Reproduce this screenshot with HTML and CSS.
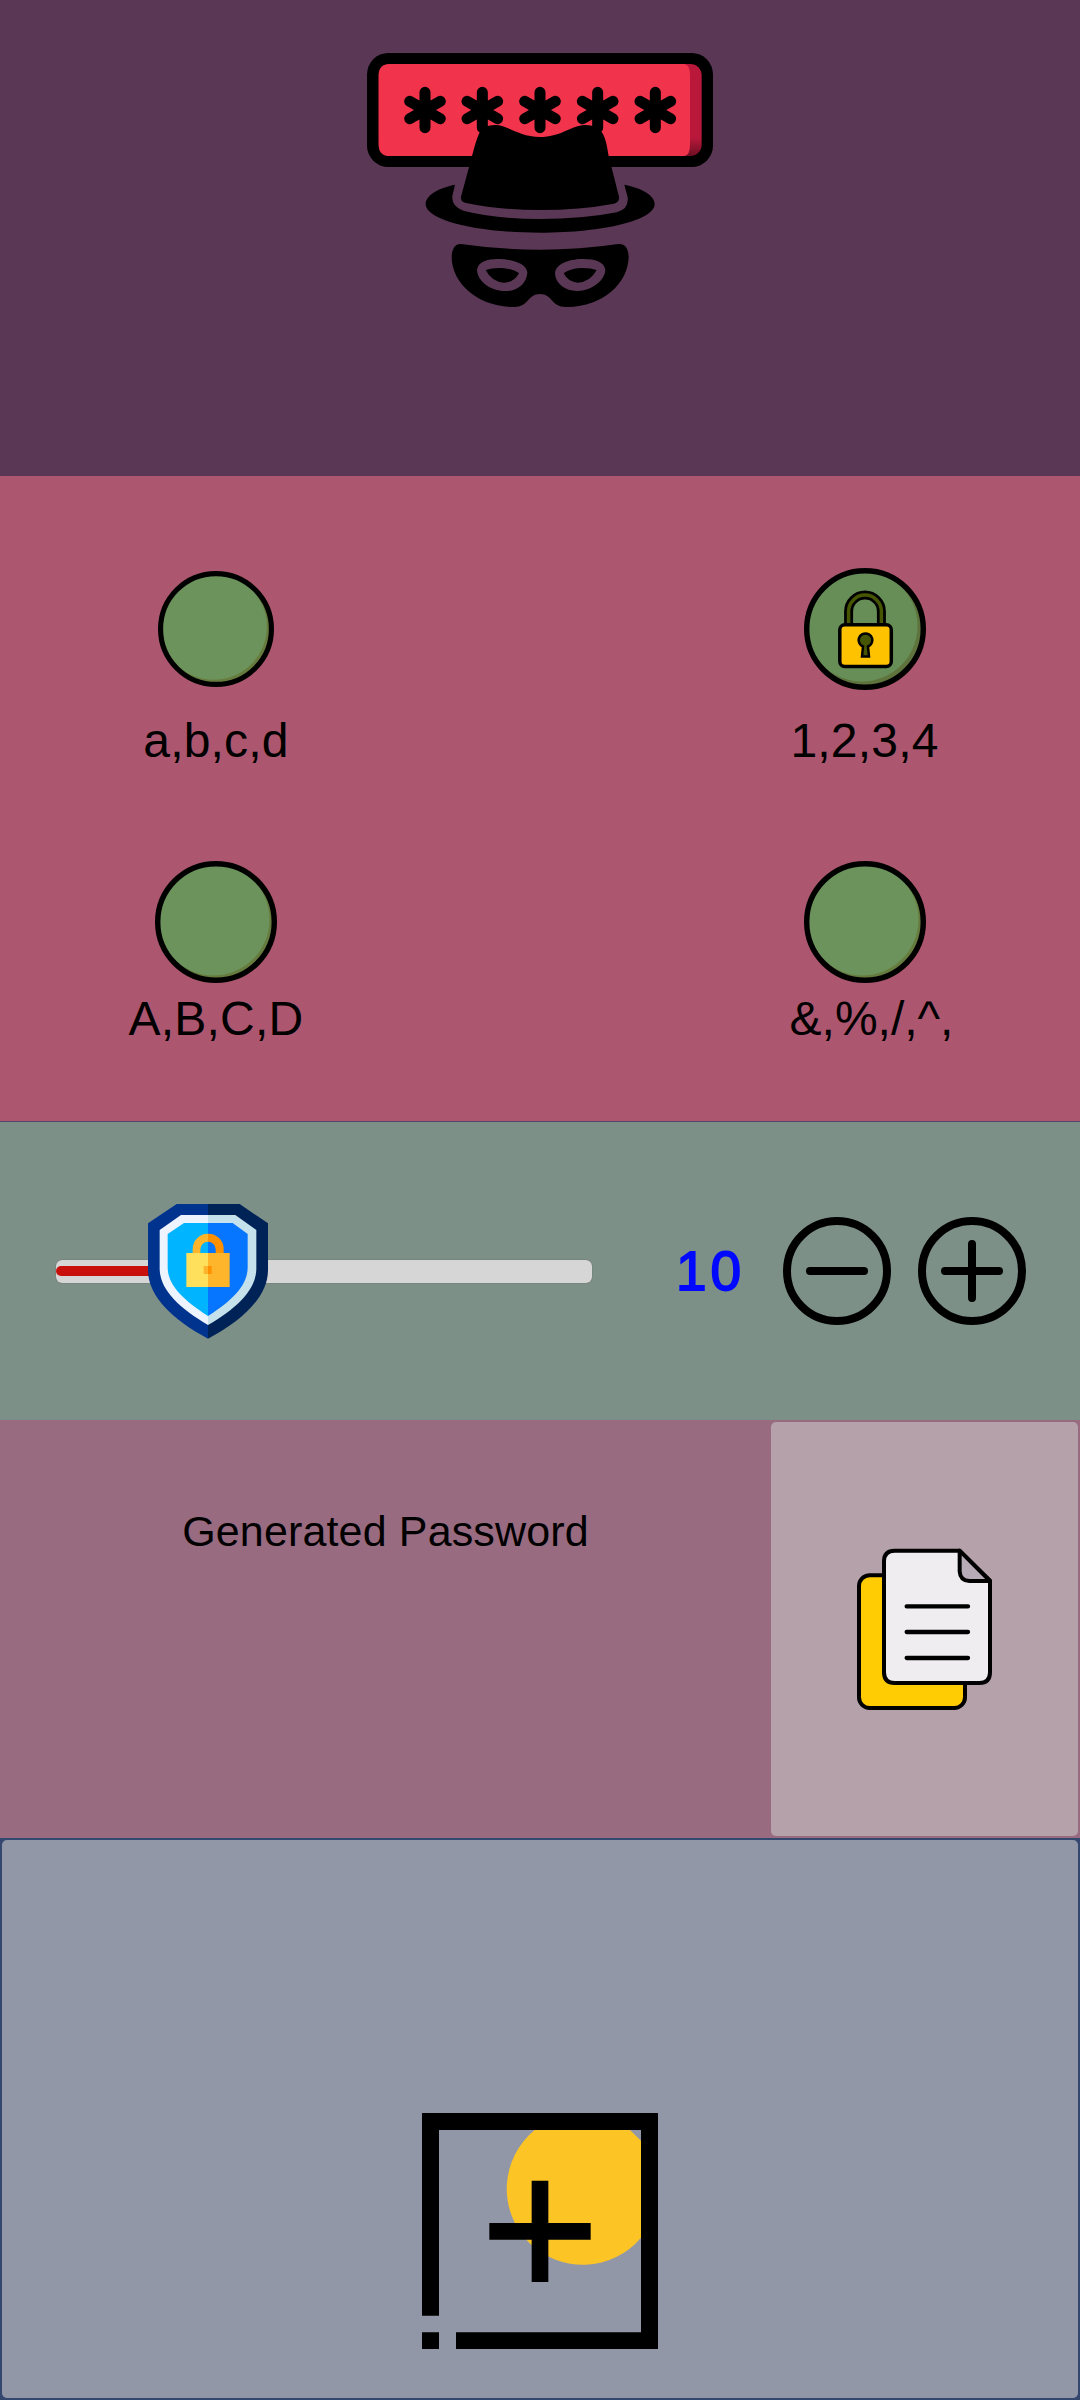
FILE: index.html
```html
<!DOCTYPE html>
<html lang="en">
<head>
<meta charset="utf-8">
<title>Password Generator</title>
<link rel="stylesheet" href="styles.css">
</head>
<body>
<main class="app">
  <header class="hero">
    <svg class="logo" width="348" height="256" viewBox="48 36 1044 768">
      <defs>
        <path id="star" d="M0-53V53M-46-26L46 26M-46 26L46-26" stroke="#000" stroke-width="33" stroke-linecap="round"/>
        <linearGradient id="edge" x1="0" y1="0" x2="0" y2="1">
          <stop offset="0.8" stop-color="#b9183b"/>
          <stop offset="1" stop-color="#6e0e23"/>
        </linearGradient>
      </defs>
      <rect x="51" y="39" width="1038" height="342" rx="64"/>
      <rect x="86" y="72" width="969" height="276" rx="34" fill="url(#edge)"/>
      <path d="M120 72H1003Q1020 74 1020 106V314Q1020 346 1003 348H120Q86 348 86 314V106Q86 72 120 72Z" fill="#f1334c"/>
      <use href="#star" x="225" y="210"/>
      <use href="#star" x="397" y="210"/>
      <use href="#star" x="570" y="210"/>
      <use href="#star" x="743" y="210"/>
      <use href="#star" x="916" y="210"/>
      <path d="M333 470L366 348C376 312 382 290 391 274Q405 253 440 255C480 260 510 291 570 291S660 260 700 255Q740 253 757 279C768 296 772 325 776 348L807 470Q809 487 792 491Q690 510 570 510T348 489Q331 486 333 470Z"/>
      <path d="M315 434C255 446 227 470 227 492C227 540 375 578 570 578S914 540 914 492C914 470 885 446 823 434L833 472Q837 508 800 517Q700 537 570 537T340 512Q304 500 307 468Z"/>
      <path fill-rule="evenodd" d="M333 612Q450 629 570 629T805 612C828 610 836 630 836 652C834 730 758 802 650 801C603 802 608 762 570 762S537 802 490 801C382 800 306 730 305 652C305 630 314 610 333 612ZM381 690C384 664 415 656 447 657C485 658 530 670 532 698C530 732 500 754 465 753C420 753 382 722 381 690ZM766 690C764 664 730 656 696 657C655 658 617 672 615 700C617 734 650 754 683 753C727 752 765 720 766 690Z"/>
      <path d="M407 690Q426 683 455 684Q490 686 507 700Q492 727 463 728Q425 726 407 690ZM740 690Q720 683 693 684Q658 686 641 700Q655 727 683 728Q721 726 740 690Z"/>
    </svg>
  </header>

  <section class="options">
    <div class="option">
      <svg class="dot dot-small" viewBox="0 0 122 122"><use href="#disc"/></svg>
      <span class="caption">a,b,c,d</span>
    </div>
    <div class="option option-right">
      <svg class="dot" viewBox="0 0 122 122">
        <circle cx="61" cy="61" r="58" fill="#5f733d"/>
        <circle cx="58" cy="58" r="55.5" fill="#678e57"/>
        <circle cx="61" cy="61" r="58.3" fill="none" stroke="#000" stroke-width="5.400"/>
        <path d="M44.600 58V43.500a16.400 16.400 0 0 1 32.800 0V58" fill="none" stroke="#000" stroke-width="9"/>
        <path d="M44.600 58V43.500a16.400 16.400 0 0 1 32.800 0V58" fill="none" stroke="#465500" stroke-width="3.500"/>
        <rect x="35.800" y="56.800" width="51.500" height="41.800" rx="5" fill="#ffc200" stroke="#000" stroke-width="3.500"/>
        <path d="M59 78.500L58 88.500H65L64 78.500A6.800 6.800 0 1 0 59 78.500Z" fill="#465500" stroke="#000" stroke-width="2.500"/>
      </svg>
      <span class="caption">1,2,3,4</span>
    </div>
    <div class="option option-tight">
      <svg class="dot" viewBox="0 0 122 122">
        <g id="disc">
          <circle cx="61" cy="61" r="58" fill="#667b3d"/>
          <circle cx="58.500" cy="58.500" r="56" fill="#6c935c"/>
          <circle cx="61" cy="61" r="58.300" fill="none" stroke="#000" stroke-width="5.400"/>
        </g>
      </svg>
      <span class="caption">A,B,C,D</span>
    </div>
    <div class="option option-tight option-right">
      <svg class="dot" viewBox="0 0 122 122"><use href="#disc"/></svg>
      <span class="caption caption-symbols">&amp;,%,/,^,</span>
    </div>
  </section>

  <section class="length">
    <div class="slider">
      <div class="fill"></div>
      <svg class="thumb" width="120" height="135" viewBox="325 72 360 405">
        <path d="M411 72H505V476C400 420 325 350 325 270V130Z" fill="#00338d"/>
        <path d="M505 72H600L685 130V270C685 350 610 420 505 476Z" fill="#002357"/>
        <path d="M424 105H505V435C420 385 360 330 360 265V150Z" fill="#eef4ff"/>
        <path d="M505 105H587L650 150V265C650 330 590 385 505 435Z" fill="#c5e1eb"/>
        <path d="M433 129H505V408C430 360 384 315 384 262V162Z" fill="#00b4ff"/>
        <path d="M505 129H579L624 162V262C624 315 580 360 505 408Z" fill="#0675ff"/>
        <path d="M459 220V207A46 46 0 0 1 505 161V185A23 23 0 0 0 482 208V220Z" fill="#ffb52b"/>
        <path d="M505 161A46 46 0 0 1 552 207V220H528V208A23 23 0 0 0 505 185Z" fill="#ff9100"/>
        <path d="M440 219H505V321H440Z" fill="#ffe05c"/>
        <path d="M505 219H570V321H505Z" fill="#ffb52b"/>
        <path d="M492 258H505V282H492Z" fill="#ffb52b"/>
        <path d="M505 258H516V282H505Z" fill="#ff9100"/>
      </svg>
    </div>
    <span class="count">10</span>
    <svg class="step" viewBox="0 0 108 108">
      <circle cx="54" cy="54" r="50"/><path d="M27 54H81"/>
    </svg>
    <svg class="step" viewBox="0 0 108 108">
      <circle cx="54" cy="54" r="50"/><path d="M27 54H81M54 27V81"/>
    </svg>
  </section>

  <section class="result">
    <p class="password">Generated Password</p>
    <button class="copy" aria-label="Copy">
      <svg width="136" height="162" viewBox="351 444 408 486" stroke="#000" stroke-width="12" stroke-linecap="round" stroke-linejoin="round">
        <rect x="357" y="526" width="318" height="398" rx="32" fill="#ffcc04"/>
        <path d="M464 452H658L750 542V817Q750 849 718 849H464Q432 849 432 817V484Q432 452 464 452Z" fill="#efedf0"/>
        <path d="M659 452V515Q661 542 688 543H750Z" fill="#b6abb6"/>
        <path d="M500 619H684M500 696H684M500 774H684" stroke-width="13"/>
      </svg>
    </button>
  </section>

  <section class="action">
    <button class="generate" aria-label="Generate">
      <svg width="236" height="236" viewBox="66 69 708 708">
        <path d="M404 120H690L723 152V443A228 228 0 1 1 404 120Z" fill="#fcc425"/>
        <path d="M66 69H774V777H168V727H723V120H117V677H66ZM66 727H117V777H66ZM395 272H445V399H572V449H445V576H395V449H268V399H395Z"/>
      </svg>
    </button>
  </section>
</main>
</body>
</html>
```
FILE: styles.css
```css
* {
  box-sizing: border-box;
}

body {
  margin: 0;
  font-family: "Liberation Sans", Arial, sans-serif;
  color: #000;
}

svg {
  display: block;
  flex: none;
}

button {
  border: 0;
  padding: 0;
}

.app {
  display: flex;
  flex-direction: column;
  width: 1080px;
  height: 2400px;
}

.hero {
  display: flex;
  justify-content: center;
  height: 476px;
  padding-top: 52px;
  background: #5a3754;
}

.options {
  display: grid;
  grid-template-columns: 432px 432px;
  grid-template-rows: 293px 1fr;
  column-gap: 216px;
  height: 646px;
  padding-top: 92px;
  background: #ac566f;
  border-bottom: 1px solid #554568;
}

.option {
  display: flex;
  flex-direction: column;
  align-items: center;
  gap: 24px;
}

.option-right {
  padding-left: 1px;
}

.option-tight {
  gap: 9px;
}

.dot {
  width: 122px;
  height: 122px;
}

.dot-small {
  width: 116px;
  height: 116px;
  margin: 3px;
}

.caption {
  font-size: 48px;
  line-height: 54px;
  letter-spacing: 0.2px;
}

.caption-symbols {
  padding-left: 14px;
  letter-spacing: 0;
}

.length {
  display: flex;
  align-items: center;
  height: 298px;
  padding-left: 56px;
  background: #7d9087;
}

.slider {
  position: relative;
  display: flex;
  align-items: center;
  width: 536px;
  height: 23px;
  border-radius: 6px;
  background: #d6d6d6;
  box-shadow: 0 0 1px #444;
}

.fill {
  width: 150px;
  height: 10px;
  border-radius: 5px;
  background: #c80f0c;
}

.thumb {
  position: absolute;
  left: 92px;
  top: -56px;
}

.count {
  width: 191px;
  padding-left: 84px;
  font-size: 55px;
  letter-spacing: 4px;
  color: #0008ff;
  -webkit-text-stroke: 1.8px #0008ff;
}

.step {
  width: 108px;
  height: 108px;
  margin-right: 27px;
  fill: none;
  stroke: #000;
  stroke-width: 8px;
  stroke-linecap: round;
}

.result {
  display: flex;
  height: 418px;
  padding: 2px 2px 2px 0;
  background: #986b80;
}

.password {
  width: 771px;
  margin: 0;
  padding-top: 84px;
  text-align: center;
  font-size: 43px;
  line-height: 50px;
  letter-spacing: 0.15px;
}

.copy {
  display: flex;
  align-items: center;
  justify-content: center;
  width: 307px;
  padding-left: 1px;
  border-radius: 5px;
  background: #b4a1a9;
}

.action {
  display: flex;
  height: 562px;
  padding: 2px;
  background: #34486f;
}

.generate {
  display: flex;
  flex: 1;
  align-items: flex-end;
  justify-content: center;
  padding-bottom: 49px;
  border-radius: 5px;
  background: #9297a7;
}
```
